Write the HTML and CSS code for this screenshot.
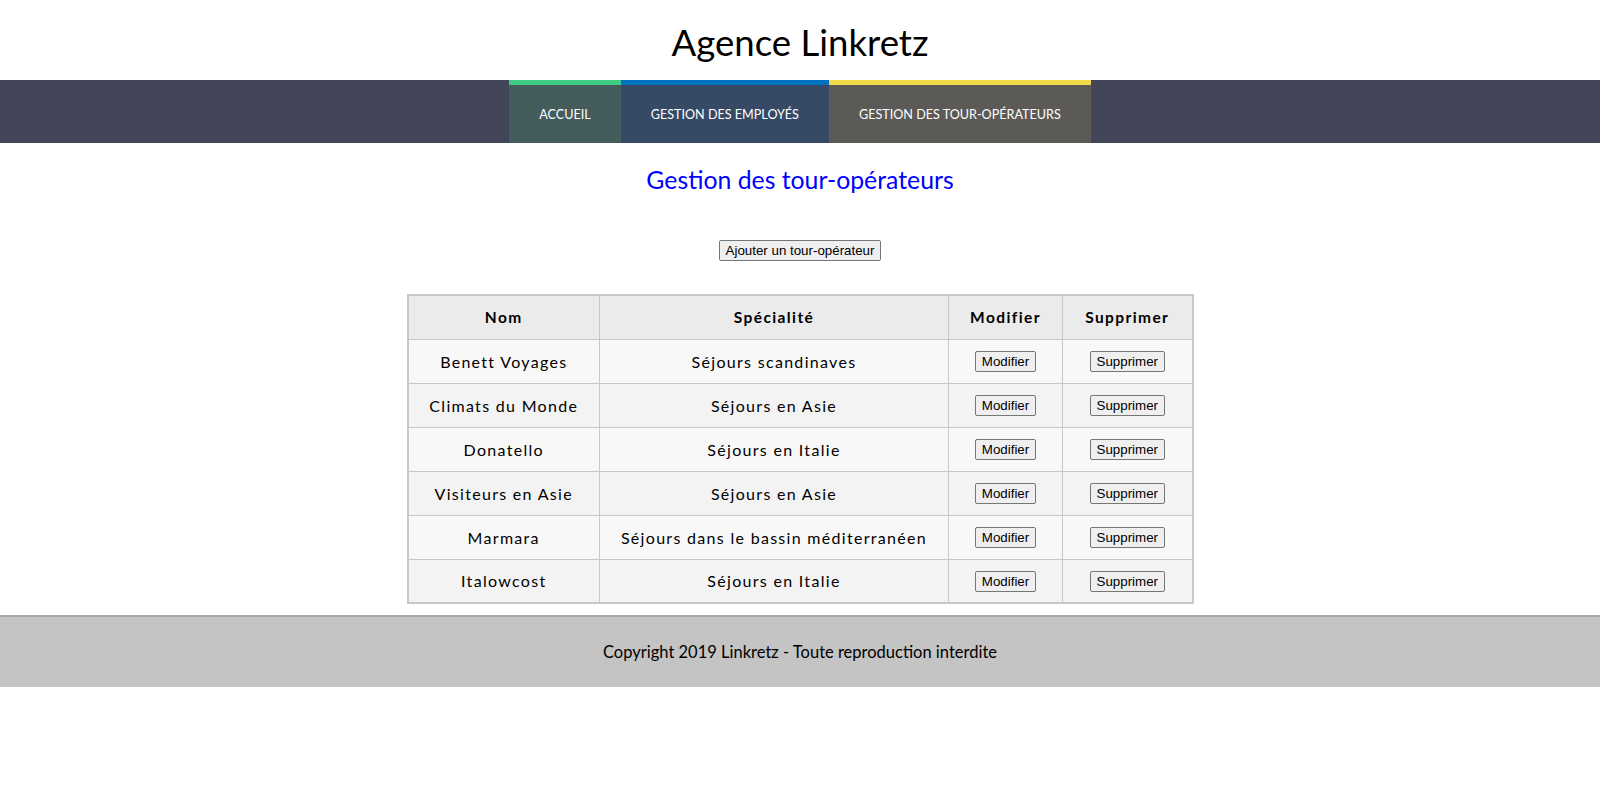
FILE: index.html
```html
<!DOCTYPE html>
<html lang="fr">
<head>
<meta charset="utf-8">
<title>Agence Linkretz</title>
<link rel="stylesheet" href="styles.css">
</head>
<body>
<header class="site-header">
  <h1 class="site-title">Agence Linkretz</h1>
</header>
<nav class="main-nav">
  <a class="nav-item nav-home" href="#">Accueil</a>
  <a class="nav-item nav-emp" href="#">Gestion des employés</a>
  <a class="nav-item nav-tour" href="#">Gestion des tour-opérateurs</a>
</nav>
<main class="content">
  <h2 class="page-title">Gestion des tour-opérateurs</h2>
  <div class="add-row"><button class="btn" type="button">Ajouter un tour-opérateur</button></div>
  <table class="data-table">
    <thead>
      <tr><th class="c-nom">Nom</th><th class="c-spec">Spécialité</th><th class="c-mod">Modifier</th><th class="c-sup">Supprimer</th></tr>
    </thead>
    <tbody>
      <tr><td>Benett Voyages</td><td>Séjours scandinaves</td><td><button class="btn" type="button">Modifier</button></td><td><button class="btn" type="button">Supprimer</button></td></tr>
      <tr><td>Climats du Monde</td><td>Séjours en Asie</td><td><button class="btn" type="button">Modifier</button></td><td><button class="btn" type="button">Supprimer</button></td></tr>
      <tr><td>Donatello</td><td>Séjours en Italie</td><td><button class="btn" type="button">Modifier</button></td><td><button class="btn" type="button">Supprimer</button></td></tr>
      <tr><td>Visiteurs en Asie</td><td>Séjours en Asie</td><td><button class="btn" type="button">Modifier</button></td><td><button class="btn" type="button">Supprimer</button></td></tr>
      <tr><td>Marmara</td><td>Séjours dans le bassin méditerranéen</td><td><button class="btn" type="button">Modifier</button></td><td><button class="btn" type="button">Supprimer</button></td></tr>
      <tr><td>Italowcost</td><td>Séjours en Italie</td><td><button class="btn" type="button">Modifier</button></td><td><button class="btn" type="button">Supprimer</button></td></tr>
    </tbody>
  </table>
</main>
<footer class="site-footer">
  <p class="footer-text">Copyright 2019 Linkretz - Toute reproduction interdite</p>
</footer>
</body>
</html>
```
FILE: styles.css
```css
* { box-sizing: border-box; }
html, body { margin: 0; padding: 0; background: #fff; }
body { font-family: Lato, "Liberation Sans", sans-serif; color: #000; }

.site-header { height: 80px; display: flex; align-items: center; justify-content: center; }
.site-title { margin: 0; font-weight: 400; font-size: 36.6px; line-height: 1; padding-top: 4px; color: #000; }

.main-nav { background: #434659; height: 63px; display: flex; justify-content: center; }
.nav-item { display: flex; align-items: center; padding: 1px 30px 0; border-top: 5px solid; color: #fff; text-decoration: none; text-transform: uppercase; font-size: 12.6px; }
.nav-home { background: #445c5c; border-color: #3fcb84; }
.nav-emp { background: #364a66; border-color: #0070c0; }
.nav-tour { background: #5c5a56; border-color: #f0d848; }

.content { display: flex; flex-direction: column; align-items: center; }
.page-title { margin: 22px 0 0; font-weight: 400; font-size: 24.8px; line-height: 30px; color: #0000ff; }
.add-row { margin-top: 44px; height: 21px; }
.btn { font-family: "Liberation Sans", Arial, sans-serif; font-size: 13.333px; padding: 1px 6px; border: 1px solid #767676; border-radius: 2px; background: #efefef; color: #000; height: 21px; line-height: 17px; }

.data-table { margin-top: 34px; border-collapse: collapse; border: 2px solid #c8c8c8; font-size: 16px; letter-spacing: 1.3px; }
.data-table th, .data-table td { border: 1px solid #c8c8c8; height: 44px; padding: 0 16px; text-align: center; vertical-align: middle; }
.data-table th { background: #ebebeb; font-weight: 700; font-size: 15.5px; letter-spacing: 1.4px; }
.data-table tbody tr:nth-child(odd) td { background: #f8f8f8; }
.data-table tbody tr:nth-child(even) td { background: #f3f3f3; }
.c-nom { width: 192px; }
.c-spec { width: 349px; }
.c-mod { width: 114px; }
.c-sup { width: 130px; }
.data-table .btn { letter-spacing: 0; }

.site-footer { margin-top: 11px; background: #c4c4c4; border-top: 2px solid #a9a9a9; height: 72px; display: flex; align-items: center; justify-content: center; }
.footer-text { margin: 0; font-size: 16.5px; }
```
